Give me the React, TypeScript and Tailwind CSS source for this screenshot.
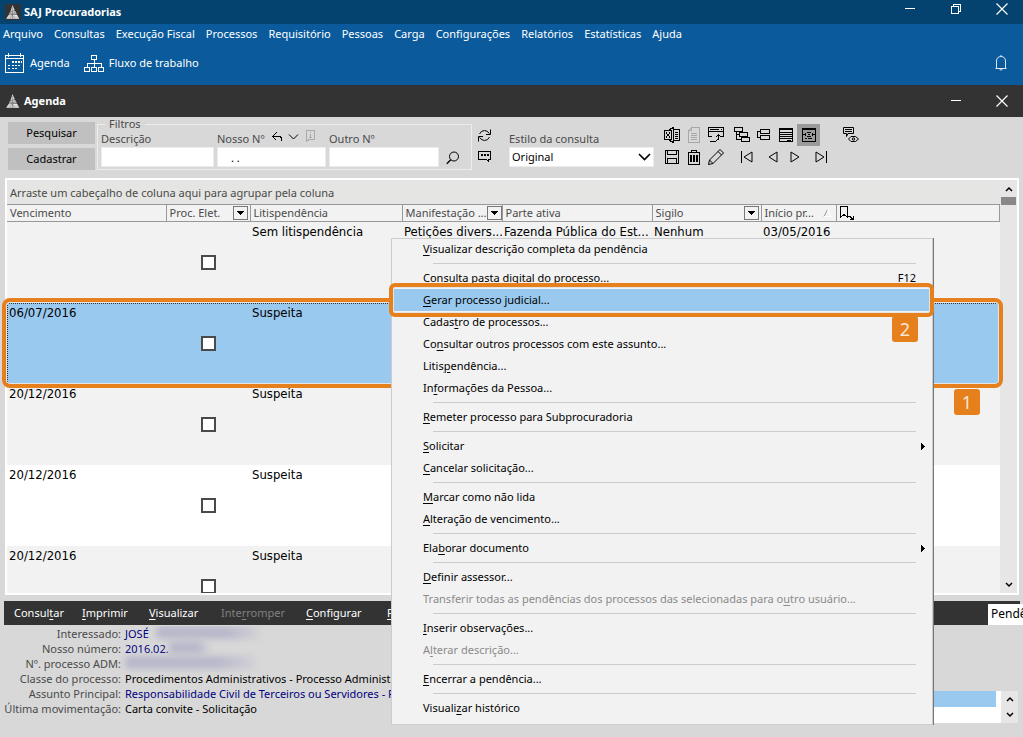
import type { ReactNode } from 'react';

type IconProps = {
  w?: number;
  h?: number;
  className?: string;
  crisp?: boolean;
  children: ReactNode;
};

const Icon = ({ w = 16, h = 16, className = '', crisp = true, children }: IconProps) => (
  <svg
    width={w}
    height={h}
    viewBox={`0 0 ${w} ${h}`}
    fill="none"
    stroke="currentColor"
    shapeRendering={crisp ? 'crispEdges' : 'auto'}
    className={`shrink-0 ${className}`}
    aria-hidden="true"
  >
    {children}
  </svg>
);

const LogoIcon = () => (
  <Icon w={16} h={16} crisp={false} className="bg-[#333333]">
    <path d="M7.5 1 L9.8 6.5 L5.6 7 Z" fill="#dddddd" stroke="none" />
    <path d="M5.2 7.5 L10.2 7 L12 10.5 L3.8 10.8 Z" fill="#cfcfcf" stroke="none" />
    <path d="M3.4 11.2 L12.2 11 L14.2 14.8 L1.2 14.8 Z" fill="#f0f0f0" stroke="none" />
    <path d="M7.5 3 V15 M5 8 L10 14.5 M10 8 L4.5 14.5 M2.5 13 H13.5 M4.5 9.3 H11" stroke="#5a5a5a" strokeWidth="0.4" />
  </Icon>
);

const CloseIcon = () => (
  <Icon w={12} h={12} crisp={false}>
    <path d="M0.5 0.5 L11.5 11.5 M11.5 0.5 L0.5 11.5" strokeWidth="1.2" />
  </Icon>
);

const MinimizeIcon = () => (
  <Icon w={12} h={12}>
    <path d="M1 5.5 H11" />
  </Icon>
);

const RestoreIcon = () => (
  <Icon w={12} h={12}>
    <path d="M1.5 3.5 H8.5 V10.5 H1.5 Z M3.5 3 V1.5 H10.5 V8.5 H9" />
  </Icon>
);

const ChevronDown = () => (
  <Icon w={8} h={6} crisp={false}>
    <path d="M1 1 L4 4 L7 1" strokeWidth="1.5" />
  </Icon>
);

const ChevronUp = () => (
  <Icon w={8} h={6} crisp={false}>
    <path d="M1 5 L4 2 L7 5" strokeWidth="1.5" />
  </Icon>
);

const menus = [
  'Arquivo',
  'Consultas',
  'Execução Fiscal',
  'Processos',
  'Requisitório',
  'Pessoas',
  'Carga',
  'Configurações',
  'Relatórios',
  'Estatísticas',
  'Ajuda',
];

type Column = { label: string; width: string; filter?: boolean; sort?: boolean };

const columns: Column[] = [
  { label: 'Vencimento', width: 'w-[159px]' },
  { label: 'Proc. Elet.', width: 'w-[84px]', filter: true },
  { label: 'Litispendência', width: 'w-[152px]' },
  { label: 'Manifestação ...', width: 'w-[100px]', filter: true },
  { label: 'Parte ativa', width: 'w-[150px]' },
  { label: 'Sigilo', width: 'w-[109px]', filter: true },
  { label: 'Início pr...', width: 'w-[75px]', sort: true },
];

type Row = { cells: string[]; style: string };

const rows: Row[] = [
  {
    cells: ['', 'Sem litispendência', 'Petições divers...', 'Fazenda Pública do Est...', 'Nenhum', '03/05/2016'],
    style: 'bg-[#f2f2f2]',
  },
  {
    cells: ['06/07/2016', 'Suspeita', '', '', '', ''],
    style: 'bg-[#99c9ef] outline-1 -outline-offset-1 outline-dotted outline-[#333333]',
  },
  { cells: ['20/12/2016', 'Suspeita', '', '', '', ''], style: 'bg-[#f2f2f2]' },
  { cells: ['20/12/2016', 'Suspeita', '', '', '', ''], style: 'bg-white' },
  { cells: ['20/12/2016', 'Suspeita', '', '', '', ''], style: 'bg-[#f2f2f2]' },
];

type MenuEntry = { text: string; disabled?: boolean; active?: boolean; keys?: string; sub?: boolean } | null;

// "&" goes before the access key, null is a separator
const contextMenu: MenuEntry[] = [
  { text: '&Visualizar descrição completa da pendência' },
  null,
  { text: 'C&onsulta pasta digital do processo...', keys: 'F12' },
  { text: '&Gerar processo judicial...', active: true },
  { text: 'Cadas&tro de processos...' },
  { text: 'Co&nsultar outros processos com este assunto...' },
  { text: 'Litis&pendência...' },
  { text: 'In&formações da Pessoa...' },
  null,
  { text: '&Remeter processo para Subprocuradoria' },
  null,
  { text: '&Solicitar', sub: true },
  { text: '&Cancelar solicitação...' },
  null,
  { text: '&Marcar como não lida' },
  { text: '&Alteração de vencimento...' },
  null,
  { text: 'Ela&borar documento', sub: true },
  null,
  { text: '&Definir assessor...' },
  { text: 'Transferir todas as pendências dos processos das selecionadas para o&utro usuário...', disabled: true },
  null,
  { text: '&Inserir observações...' },
  { text: 'A&lterar descrição...', disabled: true },
  null,
  { text: '&Encerrar a pendência...' },
  null,
  { text: 'Visuali&zar histórico' },
];

const AccessText = ({ text }: { text: string }) => {
  const i = text.indexOf('&');
  if (i < 0) return <>{text}</>;
  return (
    <>
      {text.slice(0, i)}
      <u className="underline-offset-2">{text[i + 1]}</u>
      {text.slice(i + 2)}
    </>
  );
};

const AppHeader = () => (
  <header className="bg-[#0b5b9c] text-white">
    <div className="flex h-6 items-center justify-between bg-[#044270] pl-[5px] pr-[15px]">
      <h1 className="flex items-center gap-[3px] font-bold">
        <LogoIcon />
        SAJ Procuradorias
      </h1>
      <div className="flex gap-[34px] pb-1.5">
        <button type="button" aria-label="Minimizar"><MinimizeIcon /></button>
        <button type="button" aria-label="Restaurar"><RestoreIcon /></button>
        <button type="button" aria-label="Fechar"><CloseIcon /></button>
      </div>
    </div>
    <nav className="flex h-5 items-center gap-[11px] pl-[3px]">
      {menus.map((m) => (
        <button key={m} type="button" className="whitespace-nowrap">
          {m}
        </button>
      ))}
    </nav>
    <div className="flex h-[41px] items-center pb-1 pl-[5px] pr-4">
      <button type="button" className="flex items-center gap-1.5">
        <Icon w={19} h={20}>
          <path d="M0.5 2.5 H18.5 V19.5 H0.5 Z M0 5.5 H19 M3.5 0 V4 M15.5 0 V4" />
          <path
            d="M7 9 h2 M10 9 h2 M13 9 h2 M16 9 h1 M3 12.5 h2 M7 12.5 h2 M10 12.5 h2 M13 12.5 h2 M3 15.5 h2 M7 15.5 h2 M10 15.5 h2"
            strokeWidth="1.4"
          />
        </Icon>
        Agenda
      </button>
      <button type="button" className="ml-[14px] flex items-center gap-[5px]">
        <Icon w={20} h={18}>
          <path d="M7.5 1.5 H12.5 V5.5 H7.5 Z M0.5 13.5 H5.5 V17.5 H0.5 Z M7.5 13.5 H12.5 V17.5 H7.5 Z M14.5 13.5 H19.5 V17.5 H14.5 Z M10.5 5 V13 M3.5 13 V9.5 H17.5 V13" />
        </Icon>
        Fluxo de trabalho
      </button>
      <button type="button" aria-label="Notificações" className="ml-auto">
        <Icon w={12} h={16} crisp={false}>
          <path d="M0.5 13.5 H11.5 M1.5 13 V6 C1.5 3 3.5 1.5 6 1.5 C8.5 1.5 10.5 3 10.5 6 V13 M4.5 13.5 Q6 17 7.5 13.5 M6 0 V1.5" stroke="#dbe7f2" />
        </Icon>
      </button>
    </div>
  </header>
);

const Filters = () => (
  <fieldset className="min-w-0 border border-[#ececec] pb-0.5 pl-[3px] pr-[11px]">
    <legend className="ml-1 px-1 leading-[14px]">Filtros</legend>
    <div className="flex items-end gap-[3px]">
      <div className="flex flex-col">
        <label htmlFor="descricao" className="leading-4">Descrição</label>
        <input id="descricao" className="h-5 w-[113px] border border-[#ececec] bg-white px-1" />
      </div>
      <div className="flex flex-col">
        <div className="flex h-4 items-center">
          <label htmlFor="nosso" className="w-[54px] whitespace-nowrap leading-4">Nosso Nº</label>
          <button type="button" aria-label="Desfazer" className="pb-1 text-black">
            <Icon w={12} h={10}>
              <path d="M5.5 0.5 L1.5 4.5 L5.5 8.5 M1 4.5 H8.5 Q10.5 4.5 10.5 9" strokeWidth="1.3" />
            </Icon>
          </button>
          <button type="button" aria-label="Abrir" className="ml-[5px] pb-1 text-black">
            <Icon w={11} h={8} crisp={false}>
              <path d="M1 1.5 L5.5 6 L10 1.5" />
            </Icon>
          </button>
          <button type="button" aria-label="Informações" className="ml-[7px] pb-1.5 text-[#aaaaaa]">
            <Icon w={9} h={12}>
              <path d="M0.5 0.5 H8.5 V9.5 H3 L0.5 11.5 Z M4.5 2 V3 M4.5 4 V8 M3 7.5 H6" />
            </Icon>
          </button>
        </div>
        <input id="nosso" defaultValue=". ." className="h-5 w-[109px] border border-[#ececec] bg-white pl-[13px] text-black" />
      </div>
      <div className="flex flex-col">
        <label htmlFor="outro" className="leading-4">Outro Nº</label>
        <input id="outro" className="h-5 w-[110px] border border-[#ececec] bg-white px-1" />
      </div>
      <button type="button" aria-label="Buscar" className="ml-1 pb-0.5 text-black">
        <Icon w={14} h={14} crisp={false}>
          <circle cx="8" cy="5.5" r="4.5" />
          <path d="M4.8 8.8 L0.8 12.8" strokeWidth="1.3" />
        </Icon>
      </button>
    </div>
  </fieldset>
);

const IconButton = ({ label, pressed, className = '', children }: { label: string; pressed?: boolean; className?: string; children: ReactNode }) => (
  <button
    type="button"
    aria-label={label}
    className={`flex items-center justify-center ${pressed ? 'bg-[#9a9a9a]' : ''} ${className || 'h-[22px] w-[22px]'}`}
  >
    {children}
  </button>
);

const ToolIcons = () => (
  <div className="ml-[7px] flex flex-col pt-[7px] text-black">
    <div className="flex h-[22px] items-center">
      <IconButton label="Exportar para Excel">
        <Icon>
          <path d="M5.5 2.5 L9.5 0.5 V15.5 L5.5 13.5 M10 2.5 H15.5 V13.5 H10 M11 5.5 H14 M11 7.5 H14 M11 9.5 H14 M11 11.5 H14 M5.5 2 V4 M5.5 12 V14" />
          <path d="M0.5 3.5 H7.5 V12.5 H0.5 Z M2 5.5 L6 10.5 M6 5.5 L2 10.5" />
        </Icon>
      </IconButton>
      <IconButton label="Documento">
        <Icon className="text-[#a8a8a8]">
          <path d="M5.5 0.5 H13.5 V15.5 H2.5 V3.5 Z M5.5 0.5 V3.5 H2.5 M5 6.5 H11 M5 8.5 H11 M5 10.5 H11 M5 12.5 H11" />
        </Icon>
      </IconButton>
      <IconButton label="Enviar">
        <Icon>
          <path d="M4 9.5 H0.5 V0.5 H15.5 V9.5 H12 M2 2.5 H11 M13 2.5 H14 M1 4.5 H15 M10.5 8 V12 L7.5 14.5 H2 M7.5 10.5 L10.5 7.5 L13.5 10.5" />
        </Icon>
      </IconButton>
      <IconButton label="Expandir grupos" className="ml-1 h-[22px] w-[22px]">
        <Icon>
          <path d="M0.5 0.5 H8.5 V4.5 H0.5 Z M5.5 5.5 H13.5 V9.5 H5.5 Z M7.5 10.5 H15.5 V14.5 H7.5 Z M2.5 5 V12.5 H7 M2.5 7.5 H5" />
        </Icon>
      </IconButton>
      <IconButton label="Recolher grupos">
        <Icon w={14} h={12}>
          <path d="M3.5 0.5 H12.5 V4.5 H3.5 Z M3.5 6.5 H12.5 V10.5 H3.5 Z M3 2.5 H0.5 V8.5 H3" />
        </Icon>
      </IconButton>
      <IconButton label="Lista">
        <Icon w={14} h={14}>
          <path d="M0.5 0.5 H13.5 V13.5 H0.5 Z M0 1.5 H14 M1 4.5 H13 M1 6.5 H13 M1 8.5 H13 M1 10.5 H13" />
          <path d="M8 12.5 H12" />
        </Icon>
      </IconButton>
      <IconButton label="Ajustar colunas" pressed className="h-[22px] w-[23px]">
        <Icon w={14} h={14}>
          <path d="M0.5 0.5 H13.5 V13.5 H0.5 Z M0 1.5 H14" />
          <path d="M1 6.5 H4 M10 6.5 H13 M3.5 5 V8 M10.5 5 V8 M5 4.5 H9 M6 6.5 H8 M5 8.5 H9 M3 10.5 H5 M6 10.5 H10" />
        </Icon>
      </IconButton>
      <IconButton label="Comentários" className="ml-5 h-[22px] w-[22px]">
        <Icon crisp={false}>
          <path d="M0.5 0.5 H10.5 V6.5 H5 L3.5 9.5 V6.5 H0.5 Z M2 2.5 H9 M2 4.5 H9" />
          <path d="M5.5 12 L8 9.5 H12.5 L15.5 12 L12.5 14.5 H8 Z" />
          <circle cx="10.5" cy="12" r="1.2" />
        </Icon>
      </IconButton>
    </div>
    <div className="flex h-[22px] items-center">
      <IconButton label="Salvar">
        <Icon w={14} h={14}>
          <path d="M0.5 0.5 H13.5 V13.5 H0.5 Z M2.5 1 V4.5 H11.5 V1 M2.5 13 V8.5 H11.5 V13" />
        </Icon>
      </IconButton>
      <IconButton label="Excluir">
        <Icon w={12} h={15}>
          <path d="M0 2.5 H12 M3.5 2 V0.5 H8.5 V2 M0.5 3 V14.5 H11.5 V3" />
          <path d="M3 5 V12 M6 5 V12 M9 5 V12" strokeWidth="1.6" />
        </Icon>
      </IconButton>
      <IconButton label="Editar">
        <Icon crisp={false}>
          <path d="M0.5 15.5 L1.5 11 L12 0.5 L15.5 4 L5 14.5 Z M10 2.5 L13.5 6 M1.5 11 L5 14.5" />
        </Icon>
      </IconButton>
      <IconButton label="Primeiro" className="ml-[9px] h-[22px] w-[22px]">
        <Icon w={12} h={12} crisp={false}>
          <path d="M0.5 0 V12 M11 1 V11 L3 6 Z" />
        </Icon>
      </IconButton>
      <IconButton label="Anterior" className="ml-1 h-[22px] w-[22px]">
        <Icon w={10} h={12} crisp={false}>
          <path d="M9 1 V11 L1 6 Z" />
        </Icon>
      </IconButton>
      <IconButton label="Próximo">
        <Icon w={10} h={12} crisp={false}>
          <path d="M1 1 V11 L9 6 Z" />
        </Icon>
      </IconButton>
      <IconButton label="Último" className="ml-1 h-[22px] w-[22px]">
        <Icon w={12} h={12} crisp={false}>
          <path d="M1 1 V11 L9 6 Z M11.5 0 V12" />
        </Icon>
      </IconButton>
    </div>
  </div>
);

const FilterBar = () => (
  <div className="flex h-[60px] shrink-0 items-start pl-2 text-[#4a4a4a]">
    <div className="mr-0.5 flex flex-col gap-1 pt-[5px] text-black">
      <button type="button" className="h-[22px] w-[87px] bg-[#c0c0c0]">Pesquisar</button>
      <button type="button" className="h-[22px] w-[87px] bg-[#c0c0c0]">Cadastrar</button>
    </div>
    <Filters />
    <div className="ml-1.5 flex flex-col gap-2 pt-3 text-black">
      <button type="button" aria-label="Atualizar">
        <Icon w={13} h={13} crisp={false}>
          <path d="M1.5 5 Q3 1.5 6.5 1.5 Q9 1.5 11.5 4.5 M12.5 0.5 V5.5 H8 M11.5 8 Q10 11.5 6.5 11.5 Q4 11.5 1.5 8.5 M0.5 12.5 V7.5 H5" />
        </Icon>
      </button>
      <button type="button" aria-label="Mensagens">
        <Icon w={13} h={12}>
          <path d="M0.5 1.5 H12.5 V9.5 H10.5 V11.5 L8.5 9.5 H0.5 Z" />
          <path d="M3 5 H5 M6 5 H8 M9 5 H11" strokeWidth="2" />
        </Icon>
      </button>
    </div>
    <div className="ml-[18px] flex flex-col pt-[14px]">
      <label htmlFor="estilo" className="leading-4">Estilo da consulta</label>
      <div className="grid items-center">
        <select
          id="estilo"
          className="col-start-1 row-start-1 h-5 w-[145px] appearance-none border border-[#ececec] bg-white pl-0.5 text-black"
        >
          <option>Original</option>
        </select>
        <Icon w={13} h={8} crisp={false} className="pointer-events-none col-start-1 row-start-1 mr-[3px] justify-self-end text-black">
          <path d="M1 1 L6.5 6.5 L12 1" strokeWidth="1.6" />
        </Icon>
      </div>
    </div>
    <ToolIcons />
  </div>
);

const Grid = () => (
  <div className="flex h-full overflow-hidden border-2 border-white bg-[#f2f2f2]">
    <div className="min-w-0 flex-1">
      <div className="h-6 bg-[#e5e5e3] pl-[3px] leading-[25px] text-[#4a4a4a]">
        Arraste um cabeçalho de coluna aqui para agrupar pela coluna
      </div>
      <table className="w-full table-fixed border-collapse">
        <thead>
          <tr className="h-[17px] border border-l-0 border-[#999999] leading-4 text-[#4a4a4a]">
            {columns.map((c) => (
              <th key={c.label} className={`${c.width} border-r border-[#999999] p-0 text-left font-normal`}>
                <div className="flex items-center justify-between pl-[3px] pr-0.5">
                  <span className="whitespace-nowrap">{c.label}</span>
                  {c.filter && (
                    <button type="button" aria-label={`Filtrar ${c.label}`} className="flex h-[14px] w-[15px] shrink-0 items-center justify-center border border-[#777777] text-black">
                      <Icon w={7} h={4}>
                        <path d="M0 0 H7 L3.5 4 Z" fill="currentColor" stroke="none" />
                      </Icon>
                    </button>
                  )}
                  {c.sort && (
                    <Icon w={9} h={8} crisp={false} className="mr-0.5">
                      <path d="M1 7.5 L4.5 0.5" stroke="#999999" />
                      <path d="M4.5 0.5 L8 7.5 H1" stroke="#ffffff" />
                    </Icon>
                  )}
                </div>
              </th>
            ))}
            <th className="p-0">
              <Icon w={15} h={14} className="ml-0.5 text-black">
                <path d="M1.5 0.5 H8.5 V11.5 L5 8.5 L1.5 11.5 Z M9 10.5 H11 L14 13.5 M14.5 10 V13.5 H11" />
              </Icon>
            </th>
          </tr>
        </thead>
        <tbody className="font-[DejaVu_Sans_Condensed] text-[13px] text-black">
          {rows.map(({ cells, style }, i) => (
            <tr key={i} className={`h-[81px] align-top leading-5 ${style}`}>
              <td className="py-0 pl-0.5 pr-0">{cells[0]}</td>
              <td className="p-0 text-center">
                <input
                  type="checkbox"
                  aria-label="Processo eletrônico"
                  className="mt-[33px] h-[15px] w-[15px] appearance-none border-2 border-[#4a4a4a] bg-white align-top"
                />
              </td>
              {cells.slice(1).map((cell, j) => (
                <td key={j} className="overflow-hidden whitespace-nowrap py-0 pl-0.5 pr-0">{cell}</td>
              ))}
              <td className="p-0" />
            </tr>
          ))}
        </tbody>
      </table>
    </div>
    <div className="flex w-[17px] shrink-0 flex-col items-center bg-[#e6e6e6] text-black">
      <button type="button" aria-label="Rolar para cima" className="flex h-[17px] w-full items-center justify-center"><ChevronUp /></button>
      <div className="h-2 w-[15px] bg-[#888888]" />
      <button type="button" aria-label="Rolar para baixo" className="mt-auto flex h-[17px] w-full items-center justify-center"><ChevronDown /></button>
    </div>
  </div>
);

const Step = ({ n, className }: { n: number; className: string }) => (
  <span className={`absolute flex h-[26px] w-[26px] items-center justify-center rounded-[3px] bg-[#e5801c] text-[18px] text-[#fbe6d2] ${className}`}>
    {n}
  </span>
);

const ActionBar = () => (
  <div className="ml-1 mr-[3px] flex h-6 shrink-0 items-center bg-[#333333] pl-[10px] text-white">
    <button type="button" className="w-[68px] text-left"><AccessText text="Consul&tar" /></button>
    <button type="button" className="w-[67px] text-left"><AccessText text="&Imprimir" /></button>
    <button type="button" className="w-[72px] text-left"><AccessText text="&Visualizar" /></button>
    <button type="button" disabled className="w-[85px] text-left text-[#808080]"><AccessText text="Inte&rromper" /></button>
    <button type="button" className="w-[81px] text-left"><AccessText text="&Configurar" /></button>
    <button type="button"><AccessText text="&F" /></button>
    <span className="-mr-[3px] ml-auto mt-[3px] h-[21px] w-[35px] overflow-hidden bg-white pl-[3px] text-[12px] leading-5 text-black">Pendê</span>
  </div>
);

const Redacted = ({ className }: { className: string }) => (
  <span className={`inline-block h-[13px] rounded-sm bg-linear-to-r from-[#b9b8cb] from-70% to-[#d0d0d6] align-top blur-[3px] ${className}`} />
);

const details: { label: string; value: ReactNode; link?: boolean }[] = [
  { label: 'Interessado:', value: <>JOSÉ <Redacted className="ml-1 w-[102px]" /></>, link: true },
  { label: 'Nosso número:', value: <>2016.02.<Redacted className="w-10" /></>, link: true },
  { label: 'Nº. processo ADM:', value: <Redacted className="w-[130px]" /> },
  { label: 'Classe do processo:', value: 'Procedimentos Administrativos - Processo Administra' },
  { label: 'Assunto Principal:', value: 'Responsabilidade Civil de Terceiros ou Servidores - R', link: true },
  { label: 'Última movimentação:', value: 'Carta convite - Solicitação' },
];

const Details = () => (
  <div className="flex h-[112px] shrink-0 items-start justify-between pr-[5px] pt-px">
    <dl className="grid w-[391px] grid-cols-[121px_1fr] gap-x-1 overflow-hidden leading-[15px]">
      {details.map((d) => (
        <div key={d.label} className="contents">
          <dt className="whitespace-nowrap text-right text-[#4a4a4a]">{d.label}</dt>
          <dd className={`min-w-0 whitespace-nowrap ${d.link ? 'text-[#00007f]' : 'text-black'}`}>{d.value}</dd>
        </div>
      ))}
    </dl>
    <div className="mt-[65px] flex h-8 w-[120px] bg-white">
      <div className="h-4 flex-1 bg-[#99c9ef]" />
      <div className="ml-[5px] flex w-[17px] flex-col bg-[#e6e6e6] text-black">
        <button type="button" aria-label="Anterior" className="flex flex-1 items-center justify-center"><ChevronUp /></button>
        <button type="button" aria-label="Próximo" className="flex flex-1 items-center justify-center"><ChevronDown /></button>
      </div>
    </div>
  </div>
);

const ContextMenu = () => (
  <div className="absolute left-[391px] top-[238px] w-[543px] border-r border-[#777777] bg-[#f2f2f2] pb-1.5 text-black shadow-[inset_0_0_0_1px_#cccccc]">
    <ul role="menu">
      {contextMenu.map((item, i) =>
        item ? (
          <li key={i} role="none">
            <button
              type="button"
              role="menuitem"
              disabled={item.disabled}
              className={`flex h-[22px] w-full items-center justify-between whitespace-nowrap pl-8 ${
                item.sub ? 'pr-2' : 'pr-[17px]'
              } ${item.active ? 'bg-[#99c9ef]' : ''} ${item.disabled ? 'text-[#8a8a8a]' : ''}`}
            >
              <span><AccessText text={item.text} /></span>
              {item.keys && <span>{item.keys}</span>}
              {item.sub && (
                <Icon w={4} h={7}>
                  <path d="M0 0 V7 L4 3.5 Z" fill="currentColor" stroke="none" />
                </Icon>
              )}
            </button>
          </li>
        ) : (
          <li key={i} role="separator" className="ml-[42px] mr-[17px] flex h-[7px] items-center">
            <span className="h-px w-full bg-[#cccccc]" />
          </li>
        ),
      )}
    </ul>
    <div className="pointer-events-none absolute -left-0.5 -right-px top-[45px] h-[34px] rounded-md border-4 border-[#e5801c] inset-shadow-[0_0_0_1px_#e4e4e4]" />
    <Step n={2} className="right-[15px] top-[78px]" />
  </div>
);

export default function App() {
  return (
    <div className="relative flex h-screen flex-col overflow-hidden bg-[#d8d8d8] font-[Noto_Sans,sans-serif] text-[11px] leading-4">
      <AppHeader />
      <div className="flex h-8 shrink-0 items-center justify-between bg-[#333333] pl-[5px] pr-[15px] text-white">
        <h2 className="flex items-center gap-[3px] font-bold"><LogoIcon />Agenda</h2>
        <div className="flex gap-[34px]">
          <button type="button" aria-label="Minimizar"><MinimizeIcon /></button>
          <button type="button" aria-label="Fechar"><CloseIcon /></button>
        </div>
      </div>
      <FilterBar />
      <main className="relative mb-1.5 ml-[5px] mr-1 min-h-0 flex-1 pt-px">
        <Grid />
        <div className="pointer-events-none absolute -left-[3px] right-4 top-[121px] h-[90px] rounded-lg border-4 border-[#e5801c] inset-shadow-[0_0_0_1px_#e4e4e4]" />
        <Step n={1} className="right-[39px] top-[212px]" />
      </main>
      <ActionBar />
      <Details />
      <ContextMenu />
    </div>
  );
}
